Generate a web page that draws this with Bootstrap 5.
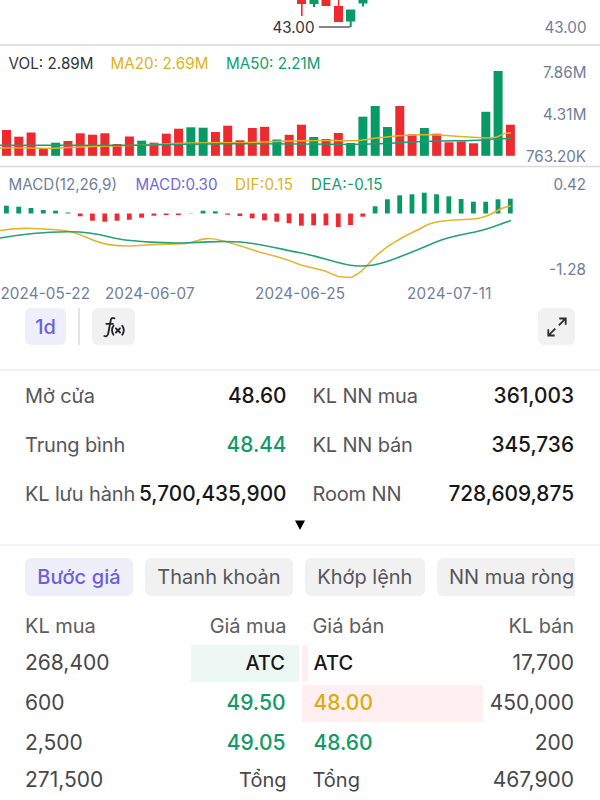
<!DOCTYPE html>
<html lang="vi">
<head>
<meta charset="utf-8">
<meta name="viewport" content="width=device-width, initial-scale=1">
<title>Bước giá</title>
<link href="https://cdn.jsdelivr.net/npm/bootstrap@5.3.0/dist/css/bootstrap.min.css" rel="stylesheet">
<style>
body { font-family: Inter, "Noto Sans", sans-serif; font-size: 20px; line-height: 30px; color: #47474b; width: 600px; height: 800px; overflow: hidden; background: #fff; }
.chart { display: block; height: 306px; font-size: 15.2px; }
.toolbar { height: 65px; padding: 2px 25px 0; border-bottom: 2px solid #f0f0f2; }
.tool { height: 37px; border-radius: 6px; background: #f1f1f2; }
.tool-range { width: 41px; }
.tool-fx { width: 43px; }
.tool-full { width: 37px; }
.tool.picked, .tab.picked { background: #efeefb; color: #6c60dc; }
.tool.picked { font-weight: 500; }
.rule { width: 2px; height: 37px; background: #e4e4ea; margin: 0 12px; }
.stats { height: 175px; padding: 0 25px 0; border-bottom: 2px solid #f3f3f5; }
.stat { height: 49.2px; white-space: nowrap; }
.stat-name { color: #56565a; letter-spacing: -.15px; }
.stat-value { color: #17171a; font-weight: 500; font-size: 20.8px; }
.pair { display: grid; grid-template-columns: 261.5px 261.5px; column-gap: 26px; }
.more { height: 14px; margin-top: -1px; }
.tabs { padding: 12px 25px 0; }
.strip { gap: 12px; }
.tab { height: 38px; padding: 0 12.3px; border-radius: 6px; background: #f1f1f2; color: #56565a; white-space: nowrap; }
.tab.picked { font-weight: 450; letter-spacing: .1px; }
.book { padding: 12px 25px 0; }
.book-head { height: 35px; color: #5c5c60; letter-spacing: -.05px; }
.book-row { height: 40px; }
.book-row:last-child { height: 34px; }
.book-row .fill { height: 37px; }
.num { font-size: 21px; }
.buy { background: #edf8f4; margin-right: -12.5px; padding-right: 14px; width: 108px; }
.price { margin-right: 1px; }
.sell { margin-left: -10.5px; white-space: nowrap; }
.sell > span { margin-left: 11.5px; }
.sell-bg { background: #ffeff1; }
.up { color: #119a66; }
.flat { color: #d9ad0c; }
.ink { color: #17171a; }
.mid { font-weight: 500; }
</style>
</head>
<body>
<svg class="chart w-100" viewBox="0 0 600 306" id="chart">
  <g fill="#ee2a30"><rect x="297" y="0" width="9" height="4"/><rect x="301" y="0" width="1.6" height="16"/><rect x="321.5" y="0" width="9" height="6"/><rect x="334" y="6" width="9" height="16"/><rect x="337.8" y="0" width="1.6" height="7"/></g>
  <g fill="#079a66"><rect x="309.5" y="0" width="9" height="4"/><rect x="313" y="0" width="2" height="7"/><rect x="346" y="9.5" width="9.3" height="12"/><rect x="349.7" y="21" width="2" height="6"/><rect x="358.5" y="0" width="9" height="3.5"/><rect x="362" y="0" width="2" height="6.5"/></g>
  <path d="M319 27H350" stroke="#444" stroke-width="1.3"/>
  <path d="M0 45H600M0 166.5H600" stroke="#d9d9dc" stroke-width="1.6"/>
  <g id="vol"></g>
  <g fill="none" stroke-width="1.5">
    <path stroke="#d9b52a" d="M0 148C20 147 35 149 55 148.3S90 146 120 145.7S160 144 190 143S230 143.5 260 142S300 140 330 140.5S355 141 370 139S395 135 420 134.8S450 136 478 137.6S495 133.5 511 132.7"/>
    <path stroke="#1d9b72" d="M0 145.3H130C170 145 190 143.7 230 143.7S290 143.5 335 144.3S400 142 430 141.3S475 141 488 139.5S505 139 511 138.5"/>
  </g>
  <g id="macd"></g>
  <g fill="none" stroke-width="1.6">
    <path stroke="#e0b636" d="M0 230.5C15 227.8 28 228 40 228.8S60 229 72 232S93 242 109 244.6S134 246 147 245S170 244 182 243.8S197 239 207 238.6S220 240.5 232 243.5S253 250.5 265 253.5S288 259.5 300 264.8L325 271L338 276.5L351 277.5C363 272 365 267 375 257S390 245 400 239S416 231.5 424 226.5S447 220 460 219.7S480 219 488 215.5S500 207.5 511 206"/>
    <path stroke="#27a078" d="M0 238C20 234.5 38 232.3 68 231.8S108 238 125 240S165 243.5 190 242.7S220 240.5 240 242S280 249 300 252.8S338 263.5 350 265.3S372 266.5 387 261.5S424 247 436 242S460 235 475 232S497 225 511 220.5"/>
  </g>
  <g fill="#333337">
    <text x="272.5" y="32.5" textLength="42">43.00</text>
    <text x="8.5" y="68.5" textLength="85">VOL: 2.89M</text>
  </g>
  <g fill="#6f7e98">
    <text x="544.5" y="32.5" textLength="42">43.00</text>
    <text x="543" y="77.5" textLength="43.5">7.86M</text>
    <text x="543" y="120" textLength="43.5">4.31M</text>
    <text x="526" y="162" textLength="60">763.20K</text>
    <text x="8.5" y="190" textLength="108.5">MACD(12,26,9)</text>
    <text x="553.5" y="190" textLength="32.5">0.42</text>
    <text x="549" y="274.5" textLength="37">-1.28</text>
    <text x="0.5" y="299" textLength="89.5">2024-05-22</text>
    <text x="105" y="299" textLength="89.5">2024-06-07</text>
    <text x="255" y="299" textLength="90">2024-06-25</text>
    <text x="407" y="299" textLength="84.5">2024-07-11</text>
  </g>
  <g fill="#dfb11f">
    <text x="110.5" y="68.5" textLength="98">MA20: 2.69M</text>
    <text x="235" y="190" textLength="58">DIF:0.15</text>
  </g>
  <g fill="#159b6c">
    <text x="226" y="68.5" textLength="94.5">MA50: 2.21M</text>
    <text x="311" y="190" textLength="71.5">DEA:-0.15</text>
  </g>
  <text x="135.5" y="190" textLength="82" fill="#7367d6">MACD:0.30</text>
</svg>

<div class="toolbar d-flex align-items-start">
  <div class="tool tool-range picked d-flex align-items-center justify-content-center">1d</div>
  <div class="rule"></div>
  <div class="tool tool-fx d-flex align-items-center justify-content-center">
    <svg width="24" height="24" viewBox="0 0 24 24" fill="none" stroke="#242428" stroke-width="1.8" stroke-linecap="round">
      <path d="M12.5 3.3C10.300 2 9 3.500 8.600 6L6.300 18C5.800 20.800 4.500 21.900 2.300 21M4.300 8.800H11"/>
      <path d="M11.500 10.800Q8.500 15.300 11.500 19.800M20.300 10.800Q23.300 15.300 20.300 19.800M13.900 13.300L18 17.500M18 13.300L13.900 17.500"/>
    </svg>
  </div>
  <div class="tool tool-full ms-auto d-flex align-items-center justify-content-center">
    <svg width="22" height="22" viewBox="0 0 22 22" fill="none" stroke="#2d2d30" stroke-width="1.8">
      <path d="M12.8 9.3L19.500 2.700M13.300 2.500H19.700V8.700M9.300 12.700L2.500 19.300M2.300 13.200V19.500H8.700"/>
    </svg>
  </div>
</div>

<div class="stats">
  <div class="pair">
    <div class="stat d-flex align-items-center justify-content-between"><span class="stat-name">Mở cửa</span><span class="stat-value">48.60</span></div>
    <div class="stat d-flex align-items-center justify-content-between"><span class="stat-name">KL NN mua</span><span class="stat-value">361,003</span></div>
    <div class="stat d-flex align-items-center justify-content-between"><span class="stat-name">Trung bình</span><span class="stat-value up">48.44</span></div>
    <div class="stat d-flex align-items-center justify-content-between"><span class="stat-name">KL NN bán</span><span class="stat-value">345,736</span></div>
    <div class="stat d-flex align-items-center justify-content-between"><span class="stat-name">KL lưu hành</span><span class="stat-value">5,700,435,900</span></div>
    <div class="stat d-flex align-items-center justify-content-between"><span class="stat-name">Room NN</span><span class="stat-value">728,609,875</span></div>
  </div>
  <div class="more d-flex justify-content-center align-items-center">
    <svg width="10" height="10" viewBox="0 0 10 10"><path d="M0 .5H10L5 10Z" fill="#000"/></svg>
  </div>
</div>

<div class="tabs">
  <div class="strip d-flex overflow-hidden">
    <div class="tab picked d-flex align-items-center flex-shrink-0">Bước giá</div>
    <div class="tab d-flex align-items-center flex-shrink-0">Thanh khoản</div>
    <div class="tab d-flex align-items-center flex-shrink-0">Khớp lệnh</div>
    <div class="tab d-flex align-items-center flex-shrink-0">NN mua ròng</div>
  </div>
</div>

<div class="book">
  <div class="pair book-head align-items-center">
    <div class="d-flex justify-content-between"><span>KL mua</span><span>Giá mua</span></div>
    <div class="d-flex justify-content-between"><span>Giá bán</span><span>KL bán</span></div>
  </div>
  <div class="pair book-row align-items-center">
    <div class="d-flex justify-content-between align-items-center"><span class="num">268,400</span><span class="fill buy ink mid d-flex align-items-center justify-content-end">ATC</span></div>
    <div class="d-flex justify-content-between align-items-center"><div class="fill sell sell-bg ink mid d-flex align-items-center" style="width:6px"><span>ATC</span></div><span class="num">17,700</span></div>
  </div>
  <div class="pair book-row align-items-center">
    <div class="d-flex justify-content-between"><span class="num">600</span><span class="num price up mid">49.50</span></div>
    <div class="d-flex justify-content-between align-items-center"><div class="fill sell sell-bg num flat mid d-flex align-items-center" style="width:181px"><span>48.00</span></div><span class="num">450,000</span></div>
  </div>
  <div class="pair book-row align-items-center">
    <div class="d-flex justify-content-between"><span class="num">2,500</span><span class="num price up mid">49.05</span></div>
    <div class="d-flex justify-content-between"><div class="sell num up mid"><span>48.60</span></div><span class="num">200</span></div>
  </div>
  <div class="pair book-row align-items-center">
    <div class="d-flex justify-content-between"><span class="num">271,500</span><span>Tổng</span></div>
    <div class="d-flex justify-content-between"><span>Tổng</span><span class="num">467,900</span></div>
  </div>
</div>

<script src="https://cdn.jsdelivr.net/npm/bootstrap@5.3.0/dist/js/bootstrap.bundle.min.js"></script>
<script>
const RED = '#ee2a30', GREEN = '#079a66', STEP = 12.29;
const rect = (x, y, w, h, fill) => `<rect x="${x}" y="${y}" width="${w}" height="${h}" fill="${fill}"/>`;
// Top edge of each volume bar and its direction
const vol = 'r130 r136.7 r132.5 r148.5 g142.7 r141 r133.3 r134.7 r133.3 r144 r136.5 g140.7 r142.7 r133.7 r128.7 g127.3 g127.7 r132 r125.7 r140.3 r128 r126.8 g139.5 r134.8 r124.7 g137 r139 r133 g143 g116.7 g106 g127 r106 r134.3 g128 r133.7 r142.3 r141.5 r143.3 g111.8 g71 r124.7'.split(' ');
document.getElementById('vol').innerHTML = vol.map((b, i) => {
  const y = +b.slice(1);
  return rect(2 + i * STEP, y, 9, 155.8 - y, b[0] === 'r' ? RED : GREEN);
}).join('');
// Height of each histogram bar: positive rises from the zero line
const macd = [7.8, 6.8, 5.5, 3.5, 2.8, 1, -2.8, -7.2, -8.2, -7.2, -6.2, -4.2, -2.2, -1.6, -1.6, .3, 2.8, 2.2, -1.2, -2.5, -4.8, -6.8, -8.2, -9.8, -12.2, -11.8, -11.8, -13.5, -11.5, -3.2, 7.2, 14.2, 18.2, 19.2, 20.8, 19.2, 17.2, 14.5, 11.8, 11.8, 14.2, 14.8];
document.getElementById('macd').innerHTML = macd.map((v, i) =>
  rect(4 + i * STEP, v > 0 ? 213.5 - v : 213.5, 4.8, Math.abs(v), v > 0 ? GREEN : RED)).join('');
</script>
</body>
</html>
